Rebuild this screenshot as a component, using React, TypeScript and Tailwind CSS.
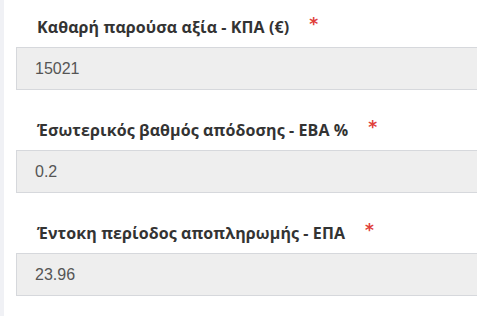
export default function App() {
  const fields = [
    { label: "Καθαρή παρούσα αξία - ΚΠΑ (€)", value: "15021" },
    { label: "Έσωτερικός βαθμός απόδοσης - ΕΒΑ %", value: "0.2" },
    { label: "Έντοκη περίοδος αποπληρωμής - ΕΠΑ", value: "23.96" },
  ];

  return (
    <div className="flex w-[477px] h-[316px] overflow-hidden bg-white">
      <div className="w-[4px] shrink-0 bg-[#f0f1f5]" />
      <div className="pl-[12px] pt-[17px] shrink-0 w-[520px]">
        {fields.map((f) => (
          <div key={f.label} className="mb-[30px]">
            <div className="flex items-start h-[20px] mb-[10px] pl-[21px]">
              <span className="font-['Open_Sans',sans-serif] font-bold text-[16px] leading-[20px] tracking-[0.1px] text-[#333]">
                {f.label}
              </span>
              <span className="ml-[20px] text-[#e0403a] text-[17px] leading-[14px] font-bold font-['DejaVu_Sans',sans-serif]">
                *
              </span>
            </div>
            <div className="h-[43px] border border-[#d6d8dc] bg-[#eeeeee] flex items-center pl-[18px]">
              <span className="font-['Liberation_Sans',sans-serif] text-[16px] text-[#555]">
                {f.value}
              </span>
            </div>
          </div>
        ))}
      </div>
    </div>
  );
}
